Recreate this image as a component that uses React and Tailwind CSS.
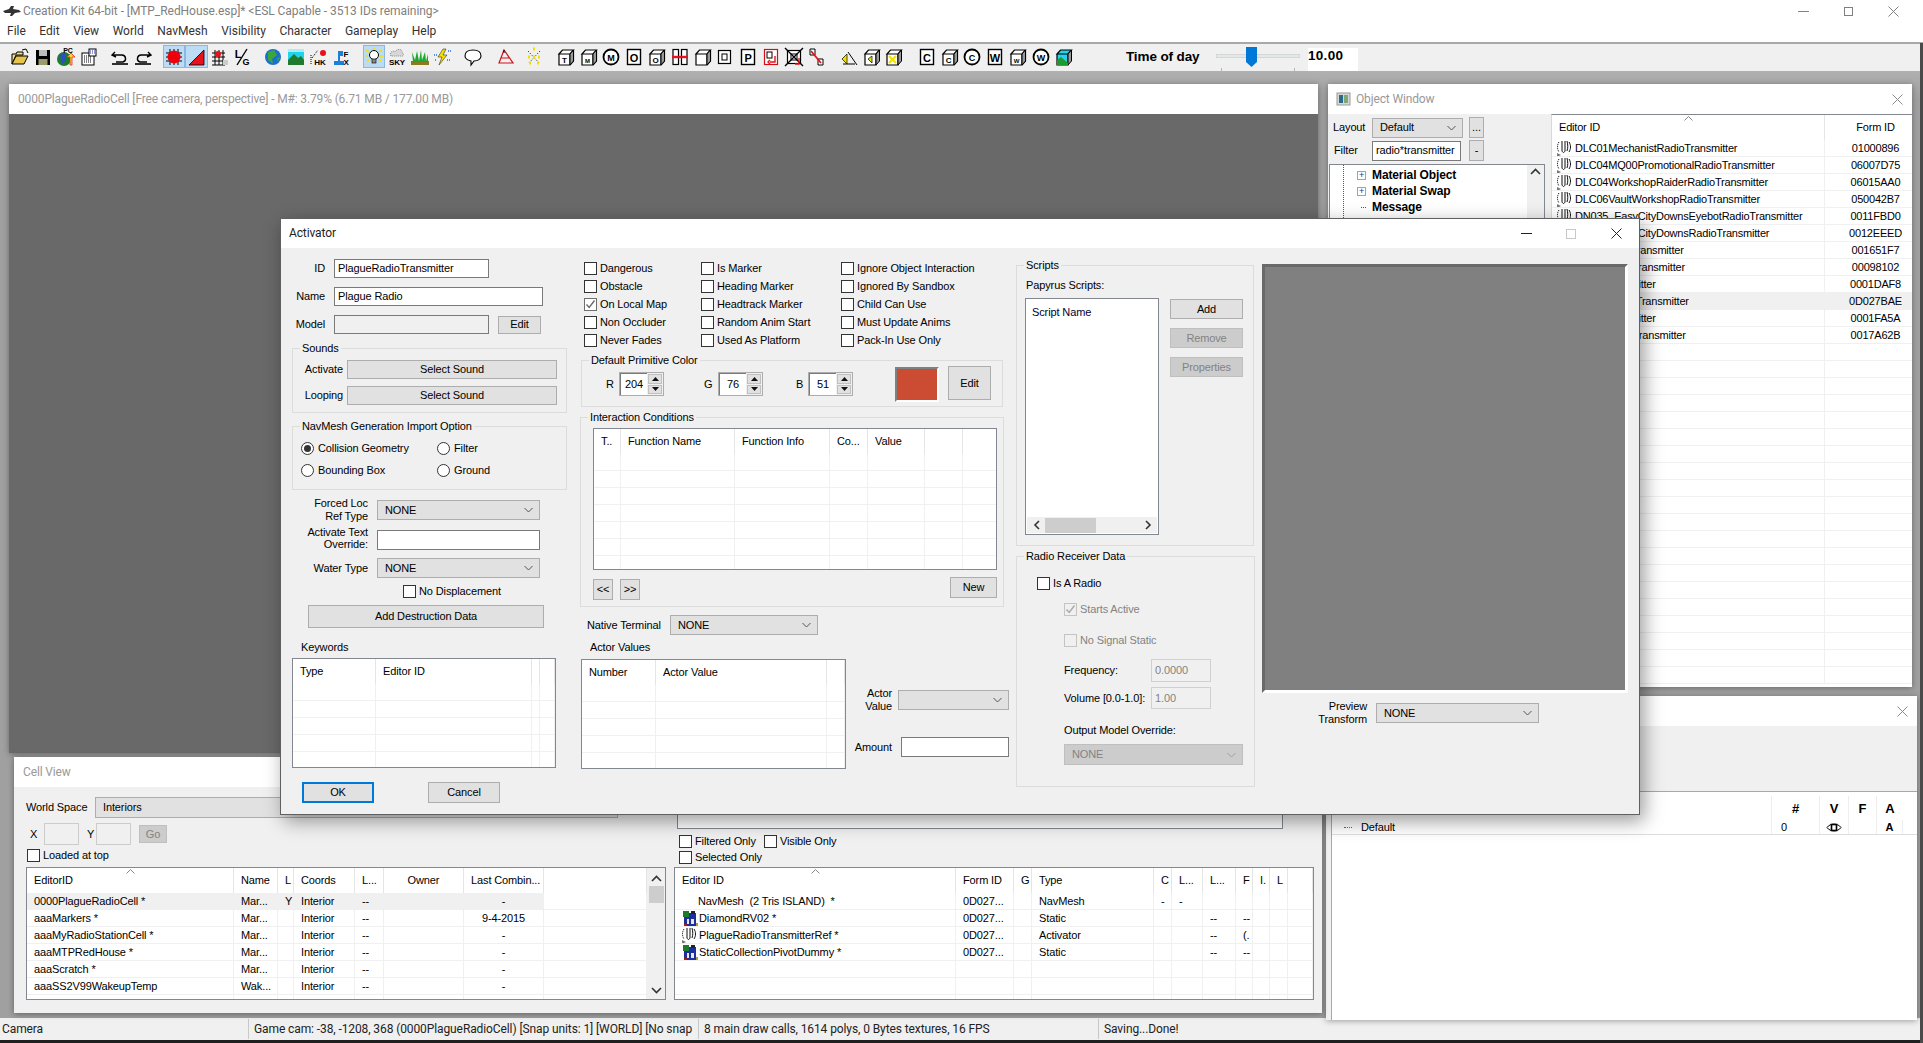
import React from "react";

const Chevron = ({ c = "#555" }) => (
  <svg width="9" height="6" viewBox="0 0 9 6" className="shrink-0"><path d="M0.5 1L4.5 5L8.5 1" fill="none" stroke={c} strokeWidth="1" /></svg>
);
const XMark = ({ c = "#808080", s = 11 }) => (
  <svg width={s} height={s} viewBox="0 0 11 11" className="shrink-0"><path d="M0.5 0.5L10.5 10.5M10.5 0.5L0.5 10.5" stroke={c} strokeWidth="1" fill="none" /></svg>
);
const Select = ({ className = "", text = "", disabled }) => (
  <div className={`flex items-center justify-between pl-[7px] pr-[6px] border shrink-0 ${disabled ? "bg-[#cccccc] border-[#bfbfbf] text-[#838383]" : "bg-[#e1e1e1] border-[#adadad]"} ${className}`}>
    <span>{text}</span>
    <Chevron c={disabled ? "#a0a0a0" : "#555"} />
  </div>
);
const Btn = ({ className = "", children, disabled, def }) => (
  <div className={`flex items-center justify-center shrink-0 border ${def ? "border-2 border-[#0078d7] bg-[#e1e1e1]" : disabled ? "bg-[#cccccc] border-[#bfbfbf] text-[#838383]" : "bg-[#e1e1e1] border-[#adadad]"} ${className}`}>{children}</div>
);
const Input = ({ className = "", children, disabled }) => (
  <div className={`flex items-center px-[3px] border shrink-0 ${disabled ? "bg-[#f0f0f0] border-[#cccccc] text-[#838383]" : "bg-white border-[#7a7a7a]"} ${className}`}>{children}</div>
);
const Check = ({ label, checked, disabled, className = "" }) => (
  <div className={`flex items-center h-[13px] ${className}`}>
    <div className={`w-[13px] h-[13px] shrink-0 border flex items-center justify-center ${disabled ? "border-[#c4c4c4] bg-[#f0f0f0]" : checked ? "border-[#6e6e6e] bg-white" : "border-[#333333] bg-white"}`}>
      {checked && <svg width="11" height="11" viewBox="0 0 11 11"><path d="M1.5 5.5L4.2 8.5L9.5 1.5" fill="none" stroke={disabled ? "#a8a8a8" : "#6a6a6a"} strokeWidth="1.4" /></svg>}
    </div>
    <span className={`ml-[3px] whitespace-nowrap ${disabled ? "text-[#838383]" : ""}`}>{label}</span>
  </div>
);
const Radio = ({ label, on, className = "" }) => (
  <div className={`flex items-center h-[13px] ${className}`}>
    <div className="w-[13px] h-[13px] rounded-full border border-[#333333] bg-white flex items-center justify-center shrink-0">
      {on && <div className="w-[7px] h-[7px] rounded-full bg-[#333333]" />}
    </div>
    <span className="ml-[4px] whitespace-nowrap">{label}</span>
  </div>
);
const Group = ({ title, className = "", children }) => (
  <div className={`relative border border-[#dcdcdc] shrink-0 ${className}`}>
    <span className="absolute -top-[7px] left-[7px] px-[2px] bg-[#f0f0f0] whitespace-nowrap leading-[12px]">{title}</span>
    {children}
  </div>
);
const Spin = ({ label, value, className = "", labelClass = "" }) => (
  <div className={`flex items-center h-[24px] shrink-0 ${className}`}>
    <span className={labelClass}>{label}</span>
    <div className="flex w-[45px] h-[24px] border border-[#adadad]">
      <div className="w-[27px] bg-white border-l border-t border-[#7a7a7a] text-center pt-[4px]">{value}</div>
      <div className="flex-1 flex flex-col bg-[#f0f0f0] p-[1px] gap-[1px]">
        <div className="flex-1 bg-[#e1e1e1] border border-[#c0c0c0] flex items-center justify-center"><svg width="7" height="4" viewBox="0 0 7 4"><path d="M3.5 0L7 4H0Z" fill="#111" /></svg></div>
        <div className="flex-1 bg-[#e1e1e1] border border-[#c0c0c0] flex items-center justify-center"><svg width="7" height="4" viewBox="0 0 7 4"><path d="M0 0H7L3.5 4Z" fill="#111" /></svg></div>
      </div>
    </div>
  </div>
);

const ActivatorIcon = () => (
  <svg width="18" height="17" viewBox="0 0 18 17" className="shrink-0">
    <path d="M3 2C1 5 1 9 3 12" fill="none" stroke="#000" strokeWidth="1" strokeDasharray="1 1" />
    <path d="M6 1V11M9 1V11M6 11C7 13 8 13 9 11M13 2C15 5 15 9 13 12M11 1C12 5 12 8 11 11" fill="none" stroke="#111" strokeWidth="1" />
    <path d="M1 13L5 15L1 17Z" fill="#777" />
  </svg>
);
const StaticIcon = () => (
  <svg width="17" height="17" viewBox="0 0 17 17" className="shrink-0" shapeRendering="crispEdges">
    <rect x="2" y="3" width="12" height="13" fill="#1c2f9c" />
    <rect x="1" y="1" width="6" height="6" fill="#1e7a2e" />
    <rect x="9" y="1" width="4" height="3" fill="#222" />
    <rect x="5" y="9" width="2" height="5" fill="#e8e8e8" />
    <rect x="9" y="9" width="3" height="5" fill="#e8e8e8" />
    <rect x="14" y="13" width="2" height="3" fill="#b0a030" />
    <rect x="2" y="14" width="3" height="2" fill="#a02020" />
  </svg>
);
const Caret = () => (
  <svg width="9" height="5" viewBox="0 0 9 5" className="absolute top-[1px] left-1/2 -ml-[4px]"><path d="M0.5 4.5L4.5 0.5L8.5 4.5" fill="none" stroke="#888" strokeWidth="1" /></svg>
);

const ListView = ({ className = "", cols, rows = [], headH = 25, minRows = 4, selected = -1, selectTo, right }) => {
  const total = Math.max(minRows, rows.length);
  const selW = selectTo;
  return (
    <div className={`flex border border-[#828790] bg-white overflow-hidden shrink-0 ${className}`}>
      <div className="flex-1 min-w-0 overflow-hidden">
        <div className="flex" style={{ height: headH }}>
          {cols.map((c, i) => (
            <div key={i} style={{ width: c.w }} className={`relative shrink-0 flex items-center border-r border-[#e5e5e5] whitespace-nowrap overflow-hidden ${c.headCenter ? "justify-center" : "pl-[7px]"}`}>
              {c.caret && <Caret />}
              {c.label}
            </div>
          ))}
        </div>
        {Array.from({ length: total }).map((_, r) => (
          <div key={r} className="relative flex h-[17px] border-b border-[#f0f0f0]">
            {r === selected && <div className="absolute left-0 top-0 h-[17px] bg-[#f0f0f0]" style={{ width: selW || "100%" }} />}
            {cols.map((c, i) => {
              const v = rows[r] ? rows[r][i] : "";
              return (
                <div key={i} style={{ width: c.w }} className={`relative shrink-0 flex items-center border-r border-[#f0f0f0] whitespace-nowrap overflow-hidden ${c.center ? "justify-center" : c.nopad ? "" : "pl-[7px]"}`}>{v}</div>
              );
            })}
          </div>
        ))}
      </div>
      {right}
    </div>
  );
};

/* ---------- toolbar drawings ---------- */
const S = ({ children }) => (<svg width="20" height="20" viewBox="0 0 20 20" className="shrink-0">{children}</svg>);
const L = ({ x = 10, y = 14, t, s = 9, c = "#000", w = "700" }) => (<text x={x} y={y} fontSize={s} fontWeight={w} fill={c} textAnchor="middle" fontFamily="Liberation Sans, sans-serif">{t}</text>);
const Cube = ({ l, s = 8 }) => (
  <S>
    <path d="M3 7H14V18H3ZM3 7L6.5 3H17.5L14 7ZM14 18L17.5 14V3" fill="#fff" stroke="#000" strokeWidth="1.2" />
    <path d="M14 7L17.5 3V14L14 18Z" fill="#999" stroke="#000" strokeWidth="1" />
    {l && <L x={8.5} y={16} t={l} s={s} />}
  </S>
);
const Sq = ({ l }) => (<S><rect x="3.5" y="2.5" width="13" height="15" fill="#fff" stroke="#000" strokeWidth="1.4" /><L y={14.5} t={l} s={11} /></S>);
const Circ = ({ l }) => (<S><circle cx="10" cy="10" r="7.5" fill="#fff" stroke="#000" strokeWidth="1.8" /><L y={13.5} t={l} s={9} /></S>);
const T = {
  open: <S><path d="M2 7H6L7 5H13V8H6L2 17Z" fill="#f5e08a" stroke="#000" /><path d="M2 17L6 9H18L14 17Z" fill="#e6c54a" stroke="#000" /><path d="M12 3L16 2L18 6" fill="none" stroke="#000" /></S>,
  save: <S><rect x="3" y="3" width="14" height="15" fill="#000" /><rect x="6" y="3" width="8" height="6" fill="#bbb" /><rect x="5.5" y="12" width="9" height="6" fill="#9a9a6a" /></S>,
  pc: <S><circle cx="8" cy="12" r="7" fill="#1f7a2f" /><path d="M4 8L9 6L10 13L6 17Z" fill="#2a4fc8" /><path d="M14 18V10H11L15 6L19 10H16V18Z" fill="#f6d42a" stroke="#d33" strokeWidth=".8" /><L x={12} y={6} t="PC" s={7} /></S>,
  form: <S><rect x="3" y="6" width="12" height="12" fill="#fff" stroke="#000" /><path d="M5 9H13M5 11H13M5 13H13M5 15H13" stroke="#000" strokeDasharray="1 1" /><rect x="10" y="2" width="7" height="7" fill="#fff" stroke="#000" /><path d="M11 4H16M11 6H16" stroke="#33a" strokeDasharray="1 1" /></S>,
  undo: <S><path d="M5 5L2 8L6 10M3 8H12C16 8 17 14 13 15H6" fill="none" stroke="#000" strokeWidth="1.4" /><path d="M2 17H18" stroke="#000" strokeWidth="1.6" /></S>,
  redo: <S><path d="M15 5L18 8L14 10M17 8H8C4 8 3 14 7 15H14" fill="none" stroke="#000" strokeWidth="1.4" /><path d="M2 17H18" stroke="#000" strokeWidth="1.6" /></S>,
  dot: <S><path d="M2 6H18M2 10H18M2 14H18M6 2V18M10 2V18M14 2V18" stroke="#000" strokeWidth="1" /><circle cx="10" cy="10" r="6.5" fill="#f0000a" /></S>,
  tri: <S><path d="M2 18L17 3V18Z" fill="#e8101a" stroke="#000" strokeWidth=".8" /></S>,
  grid: <S><path d="M2 6H15M2 10H15M2 14H15M2 18H15M5 3V18M9 3V18M13 3V18" stroke="#000" strokeWidth="1" /><circle cx="8" cy="7" r="3" fill="#e8101a" /><rect x="13" y="13" width="5" height="5" fill="#ccc" /></S>,
  lg: <S><L x={6} y={11} t="L" s={11} /><path d="M5 18L15 2" stroke="#000" strokeWidth="1.4" /><L x={14} y={18} t="G" s={9} /></S>,
  globe: <S><circle cx="10" cy="10" r="8" fill="#1c6fd0" /><path d="M5 5L11 3L14 8L9 12L10 17L5 13Z" fill="#38a83a" /><path d="M14 11L17 10L15 15Z" fill="#38a83a" /></S>,
  land: <S><rect x="2" y="2" width="16" height="16" fill="#22d3ee" /><path d="M2 18V13L8 7L12 11L15 9L18 13V18Z" fill="#1d7a2f" /><path d="M2 2H18V5H2Z" fill="#fff" opacity=".6" /></S>,
  hk: <S><circle cx="14" cy="6" r="3" fill="#e8101a" /><path d="M3 11L9 3" stroke="#000" strokeDasharray="1 1" /><path d="M2 8V18" stroke="#000" strokeDasharray="1 1" /><L x={11} y={18} t="HK" s={8} /></S>,
  fx: <S><path d="M3 18V14H7V4H12V9H9V14H13V18Z" fill="#1c80d8" /><L x={15} y={10} t="F" s={8} /><L x={15} y={18} t="X" s={8} /></S>,
  bulb: <S><circle cx="10" cy="8" r="4.5" fill="#fff" stroke="#000" /><rect x="8" y="12" width="4" height="4" fill="#888" stroke="#000" strokeWidth=".6" /><path d="M2 3L5 5M18 3L15 5M1 9H4M16 9H19M3 14L5 13M17 14L15 13M10 1V2" stroke="#f2e000" strokeWidth="1.6" /></S>,
  sky: <S><path d="M4 9C2 5 6 3 8 5C10 1 16 2 15 6C18 7 16 10 14 9Z" fill="#d8d8d8" stroke="#888" strokeDasharray="1 1" /><L y={18} t="SKY" s={8} /></S>,
  grass: <S><rect x="1" y="14" width="18" height="4" fill="#8a7a20" /><path d="M3 15L2 5L5 13L7 4L9 14L11 3L12 13L15 5L16 14L18 7V15Z" fill="#1fa82f" /></S>,
  bolt: <S><path d="M11 2L6 10H10L7 18L15 8H11L14 2Z" fill="#f6e000" stroke="#333" strokeWidth=".6" /><path d="M2 8H5M3 13H5M15 13H18M16 4H19" stroke="#1c70d8" strokeWidth="1.6" strokeDasharray="1 1" /></S>,
  bubble: <S><path d="M10 3C15 3 18 5 18 9C18 12 15 14 11 14L8 18L8 14C4 13 2 12 2 9C2 5 5 3 10 3Z" fill="#fff" stroke="#000" strokeWidth="1.1" /></S>,
  wire: <S><path d="M3 16L8 3L17 16ZM5 11H13" fill="none" stroke="#d01018" strokeWidth="1.2" /><path d="M8 3V6" stroke="#000" /></S>,
  yx: <S><path d="M4 4L16 17M16 4L4 17" stroke="#000" strokeDasharray="1 2" /><path d="M9 2H11M4 10H6M14 10H16M9 10H11M5 16H7M13 16H15" stroke="#f2e000" strokeWidth="3" /></S>,
  redH: <S><rect x="3" y="2.5" width="5.5" height="15" fill="#fff" stroke="#000" strokeWidth="1.2" /><rect x="11.5" y="2.5" width="5.5" height="15" fill="#fff" stroke="#000" strokeWidth="1.2" /><path d="M2 10H18" stroke="#e8101a" strokeWidth="2.4" /></S>,
  sq: <S><rect x="3.5" y="3.5" width="12" height="13" fill="#fff" stroke="#000" strokeWidth="1.2" /><rect x="7" y="7" width="5" height="6" fill="#fff" stroke="#000" /></S>,
  arrowbox: <S><rect x="3.5" y="2.5" width="13" height="15" fill="#fff" stroke="#d01018" strokeWidth="1.2" /><rect x="6" y="5" width="5" height="6" fill="none" stroke="#000" /><path d="M14 9V15H9M9 13L7 15L9 17" fill="none" stroke="#e8101a" strokeWidth="1.4" /></S>,
  xbox: <S><rect x="3.5" y="3.5" width="13" height="13" fill="#fff" stroke="#000" strokeWidth="1.2" /><path d="M1 1L19 19M19 1L1 19" stroke="#000" strokeWidth="1.4" /><rect x="7" y="7" width="6" height="6" fill="none" stroke="#000" /><path d="M15 11V17H11" stroke="#e8101a" fill="none" strokeWidth="1.4" /></S>,
  pipe: <S><path d="M3 2H8V8H3ZM11 12H16V18H11Z" fill="#fff" stroke="#000" /><path d="M4 4L14 16" stroke="#e8101a" strokeWidth="1.8" /></S>,
  speak: <S><path d="M9 5L18 18M4 17L16 17" stroke="#000" strokeWidth="1" /><path d="M3 12L8 7V17Z" fill="#f2e000" stroke="#000" strokeWidth=".7" /></S>,
  cubeS: <S><path d="M3 7H14V18H3ZM3 7L6.5 3H17.5L14 7Z" fill="#fff" stroke="#000" strokeWidth="1.2" /><path d="M14 7L17.5 3V14L14 18Z" fill="#999" stroke="#000" /><path d="M6 12L10 9V16Z" fill="#f2e000" stroke="#000" strokeWidth=".7" /></S>,
  cubeX: <S><path d="M3 7H14V18H3ZM3 7L6.5 3H17.5L14 7Z" fill="#fff" stroke="#000" strokeWidth="1.2" /><path d="M14 7L17.5 3V14L14 18Z" fill="#999" stroke="#000" /><path d="M5 9L12 16M12 9L5 16" stroke="#f2e000" strokeWidth="2" /></S>,
  cubeL: <S><path d="M3 7H14V18H3ZM3 7L6.5 3H17.5L14 7Z" fill="#22d3ee" stroke="#000" strokeWidth="1.2" /><path d="M14 7L17.5 3V14L14 18Z" fill="#999" stroke="#000" /><path d="M3 18V13L7 10L14 16V18Z" fill="#1c9a2f" /></S>,
};
const groups = [
  { gap: 8.4, items: [T.open, T.save, T.pc, T.form] },
  { gap: 8.4, items: [T.undo, T.redo] },
  { gap: 7.8, items: [{ a: 1, i: T.dot }, { a: 1, i: T.tri }, T.grid, T.lg] },
  { gap: 9.8, items: [T.globe, T.land, T.hk, T.fx] },
  { gap: 7.8, items: [{ a: 1, i: T.bulb }, T.sky, T.grass, T.bolt] },
  { gap: 10.2, items: [T.bubble] },
  { gap: 5.2, items: [T.wire] },
  { gap: 9.2, items: [T.yx] },
  { gap: 9.4, items: [<Cube l="T" />, <Cube l="M" s={6} />, <Circ l="M" />, <Sq l="O" />, <Cube l="O" />, T.redH, <Cube />, T.sq, <Sq l="P" />, T.arrowbox, T.xbox, T.pipe] },
  { gap: 9.6, items: [T.speak, T.cubeS, T.cubeX] },
  { gap: 0, items: [<Sq l="C" />, <Cube l="C" />, <Circ l="C" />, <Sq l="W" />, <Cube l="W" s={6} />, <Circ l="W" />, T.cubeL] },
];
const Toolbar = () => (
  <div className="flex items-center h-[29px] pl-[9px] pb-[2px] bg-[#f0f0f0] border-t-2 border-[#a8a8a8] shrink-0">
    {groups.map((g, gi) => (
      <div key={gi} className="flex items-center" style={{ marginRight: g.gap }}>
        {g.items.map((it, i) => {
          const active = it && it.a;
          return (
            <div key={i} className={`w-[22.8px] h-[23px] flex items-center justify-center border ${active ? "bg-[#bcdcf5] border-[#8cb8e0]" : "border-transparent"}`}>{active ? it.i : it}</div>
          );
        })}
      </div>
    ))}
    <span className="ml-[51px] font-bold text-[13.5px] whitespace-nowrap w-[90px] text-black">Time of day</span>
    <div className="relative w-[84px] h-[27px] shrink-0 self-start">
      <div className="absolute left-0 right-0 top-[10px] h-[4px] bg-[#e3e8e8] border border-[#d6d6d6]" />
      <svg width="11" height="20" viewBox="0 0 11 20" className="absolute left-[30px] top-[3px]"><path d="M0 0H11V15L5.5 20L0 15Z" fill="#0078d7" /></svg>
      <div className="absolute left-[5px] top-[24px] w-[1px] h-[3px] bg-[#b5b5b5]" />
      <div className="absolute left-[78px] top-[24px] w-[1px] h-[3px] bg-[#b5b5b5]" />
    </div>
    <div className="ml-[8px] w-[50px] h-[23px] self-start mt-[4px] bg-white font-bold text-[13.5px] leading-[16px] tracking-[0.3px]">10.00</div>
  </div>
);

/* ---------- dialog ---------- */
const chkRows = [
  ["Dangerous", "Is Marker", "Ignore Object Interaction"],
  ["Obstacle", "Heading Marker", "Ignored By Sandbox"],
  ["On Local Map", "Headtrack Marker", "Child Can Use"],
  ["Non Occluder", "Random Anim Start", "Must Update Anims"],
  ["Never Fades", "Used As Platform", "Pack-In Use Only"],
];

const DialogCol1 = () => (
  <div className="w-[275px] shrink-0 flex flex-col">
    <div className="flex items-center h-[19px] mt-[11px]">
      <span className="w-[33px] text-right">ID</span>
      <Input className="ml-[9px] w-[155px] h-[19px]">PlagueRadioTransmitter</Input>
    </div>
    <div className="flex items-center h-[19px] mt-[9px]">
      <span className="w-[33px] text-right">Name</span>
      <Input className="ml-[9px] w-[209px] h-[19px]">Plague Radio</Input>
    </div>
    <div className="flex items-center h-[19px] mt-[9px]">
      <span className="w-[33px] text-right">Model</span>
      <Input className="ml-[9px] w-[155px] h-[19px] !bg-[#f0f0f0]" />
      <Btn className="ml-[9px] w-[43px] h-[18px]">Edit</Btn>
    </div>
    <Group title="Sounds" className="mt-[14px] w-[275px] h-[65px] pt-[11px]">
      <div className="flex items-center h-[19px]">
        <span className="w-[50px] text-right">Activate</span>
        <Btn className="ml-[4px] w-[210px] h-[19px]">Select Sound</Btn>
      </div>
      <div className="flex items-center h-[19px] mt-[7px]">
        <span className="w-[50px] text-right">Looping</span>
        <Btn className="ml-[4px] w-[210px] h-[19px]">Select Sound</Btn>
      </div>
    </Group>
    <Group title="NavMesh Generation Import Option" className="mt-[13px] w-[275px] h-[64px] pt-[15px] pl-[8px]">
      <div className="grid grid-cols-[136px_1fr] gap-y-[9px]">
        <Radio on label="Collision Geometry" />
        <Radio label="Filter" />
        <Radio label="Bounding Box" />
        <Radio label="Ground" />
      </div>
    </Group>
    <div className="flex items-center h-[20px] mt-[10px]">
      <span className="w-[76px] text-right leading-[13px]">Forced Loc<br />Ref Type</span>
      <Select className="ml-[9px] w-[163px] h-[20px]" text="NONE" />
    </div>
    <div className="flex items-center h-[20px] mt-[10px]">
      <span className="w-[76px] text-right leading-[12px] -mt-[4px]">Activate Text<br />Override:</span>
      <Input className="ml-[9px] w-[163px] h-[20px]" />
    </div>
    <div className="flex items-center h-[20px] mt-[8px]">
      <span className="w-[76px] text-right">Water Type</span>
      <Select className="ml-[9px] w-[163px] h-[20px]" text="NONE" />
    </div>
    <Check label="No Displacement" className="mt-[7px] ml-[111px]" />
    <Btn className="mt-[7px] ml-[16px] w-[236px] h-[23px]">Add Destruction Data</Btn>
    <span className="mt-[13px] ml-[9px] h-[12px] leading-[12px]">Keywords</span>
    <ListView className="mt-[5px] w-[264px] h-[110px]" headH={25} minRows={5}
      cols={[{ label: "Type", w: 83 }, { label: "Editor ID", w: 156 }, { label: "", w: 4 }, { label: "", w: 15 }]} />
    <div className="flex mt-[14px] ml-[10px]">
      <Btn def className="w-[72px] h-[21px]">OK</Btn>
      <Btn className="ml-[54px] w-[72px] h-[21px]">Cancel</Btn>
    </div>
  </div>
);

const DialogCol2 = () => (
  <div className="w-[430px] ml-[13px] shrink-0 flex flex-col">
    <div className="grid grid-cols-[117px_140px_1fr] gap-y-[5px] mt-[14px] pl-[4px]">
      {chkRows.flat().map((t) => <Check key={t} label={t} checked={t === "On Local Map"} />)}
    </div>
    <Group title="Default Primitive Color" className="mt-[13px] ml-[1px] w-[422px] h-[47px]">
      <div className="flex items-start pt-[5px]">
        <Spin label="R" value="204" className="mt-[6px] ml-[24px]" labelClass="w-[13px]" />
        <Spin label="G" value="76" className="mt-[6px] ml-[40px]" labelClass="w-[14px]" />
        <Spin label="B" value="51" className="mt-[6px] ml-[33px]" labelClass="w-[12px]" />
        <div className="ml-[42px] mt-[1px] w-[44px] h-[35px] bg-[#cc4c33] border-l-2 border-t-2 border-r-2 border-b-2 border-l-[#7f7f7f] border-t-[#7f7f7f] border-r-white border-b-white shrink-0" />
        <Btn className="ml-[9px] w-[43px] h-[34px]">Edit</Btn>
      </div>
    </Group>
    <Group title="Interaction Conditions" className="mt-[10px] w-[424px] h-[190px] pt-[10px] pl-[12px]">
      <ListView className="w-[404px] h-[142px]" headH={25} minRows={7}
        cols={[{ label: "T..", w: 27 }, { label: "Function Name", w: 114 }, { label: "Function Info", w: 95 }, { label: "Co...", w: 38 }, { label: "Value", w: 57 }, { label: "", w: 38 }, { label: "", w: 34 }]} />
      <div className="flex items-start mt-[7px]">
        <Btn className="mt-[2px] w-[20px] h-[21px]">&lt;&lt;</Btn>
        <Btn className="mt-[2px] ml-[7px] w-[20px] h-[21px]">&gt;&gt;</Btn>
        <Btn className="ml-auto mr-[6px] w-[47px] h-[21px]">New</Btn>
      </div>
    </Group>
    <div className="flex items-center h-[20px] mt-[8px] pl-[7px]">
      <span className="w-[83px]">Native Terminal</span>
      <Select className="w-[148px] h-[20px]" text="NONE" />
    </div>
    <span className="mt-[6px] ml-[10px] h-[12px] leading-[12px]">Actor Values</span>
    <div className="flex mt-[6px] ml-[1px]">
      <ListView className="w-[265px] h-[110px]" headH={25} minRows={5}
        cols={[{ label: "Number", w: 74 }, { label: "Actor Value", w: 171 }, { label: "", w: 18 }]} />
      <div className="flex flex-col">
        <div className="flex items-center mt-[31px] h-[20px]">
          <span className="w-[46px] text-right leading-[13px]">Actor<br />Value</span>
          <Select className="ml-[6px] w-[111px] h-[20px]" />
        </div>
        <div className="flex items-center mt-[27px] h-[20px]">
          <span className="w-[46px] text-right">Amount</span>
          <Input className="ml-[9px] w-[108px] h-[20px]" />
        </div>
      </div>
    </div>
  </div>
);

const DialogCol3 = () => (
  <div className="w-[239px] ml-[6px] shrink-0 flex flex-col">
    <Group title="Scripts" className="mt-[17px] w-[238px] h-[281px] pt-[13px] pl-[8px]">
      <div className="h-[12px] leading-[12px] ml-[1px]">Papyrus Scripts:</div>
      <div className="flex mt-[7px]">
        <div className="w-[134px] h-[237px] border border-[#828790] bg-white flex flex-col justify-between shrink-0">
          <div className="pl-[6px] pt-[7px] text-[#000033]">Script Name</div>
          <div className="h-[16px] m-[1px] bg-[#f0f0f0] flex items-center">
            <svg width="16" height="16" viewBox="0 0 16 16" className="shrink-0 ml-[2px]"><path d="M10 4L6 8L10 12" fill="none" stroke="#333" strokeWidth="1.6" /></svg>
            <div className="w-[51px] h-[15px] bg-[#cdcdcd]" />
            <div className="flex-1" />
            <svg width="16" height="16" viewBox="0 0 16 16" className="shrink-0 mr-[1px]"><path d="M6 4L10 8L6 12" fill="none" stroke="#333" strokeWidth="1.6" /></svg>
          </div>
        </div>
        <div className="ml-[11px] mt-[1px] flex flex-col gap-[9px]">
          <Btn className="w-[73px] h-[20px]">Add</Btn>
          <Btn disabled className="w-[73px] h-[20px]">Remove</Btn>
          <Btn disabled className="w-[73px] h-[20px]">Properties</Btn>
        </div>
      </div>
    </Group>
    <Group title="Radio Receiver Data" className="mt-[10px] w-[239px] h-[231px] pt-[20px] pl-[20px]">
      <Check label="Is A Radio" />
      <div className="ml-[27px] flex flex-col">
        <Check disabled checked label="Starts Active" className="mt-[13px]" />
        <Check disabled label="No Signal Static" className="mt-[18px]" />
        <div className="flex items-center mt-[12px] h-[23px]">
          <span className="w-[87px]">Frequency:</span>
          <Input disabled className="w-[60px] h-[23px] !border-[#d0d0d0]">0.0000</Input>
        </div>
        <div className="flex items-center mt-[5px] h-[22px]">
          <span className="w-[87px] whitespace-nowrap">Volume [0.0-1.0]:</span>
          <Input disabled className="w-[60px] h-[22px] !border-[#d0d0d0]">1.00</Input>
        </div>
        <span className="mt-[15px] h-[12px] leading-[12px]">Output Model Override:</span>
        <Select disabled className="mt-[8px] w-[179px] h-[21px]" text="NONE" />
      </div>
    </Group>
  </div>
);

const DialogCol4 = () => (
  <div className="w-[366px] ml-[7px] shrink-0 flex flex-col">
    <div className="mt-[16px] w-[366px] h-[429px] bg-[#808080] border-[3px] border-l-[#696969] border-t-[#696969] border-r-white border-b-white" />
    <div className="flex items-center mt-[10px] h-[20px]">
      <span className="w-[105px] text-right leading-[13px]">Preview<br />Transform</span>
      <Select className="ml-[9px] w-[163px] h-[20px]" text="NONE" />
    </div>
  </div>
);

const Dialog = () => (
  <div className="absolute left-[280px] top-[147px] w-[1360px] h-[597px] bg-[#f0f0f0] border border-[#606060] shadow-[4px_6px_18px_rgba(0,0,0,0.4)] flex flex-col">
    <div className="h-[29px] bg-white flex items-center pl-[8px] shrink-0 text-[12px] font-['Roboto',sans-serif] text-[#222]">
      <span>Activator</span>
      <div className="ml-auto flex items-center">
        <div className="w-[11px] h-[1px] bg-[#222] mr-[34px]" />
        <div className="w-[10px] h-[10px] border border-[#c8c8c8] mr-[35px]" />
        <div className="mr-[17px]"><XMark c="#222" /></div>
      </div>
    </div>
    <div className="flex pl-[11px]">
      <DialogCol1 />
      <DialogCol2 />
      <DialogCol3 />
      <DialogCol4 />
    </div>
  </div>
);

/* ---------- windows ---------- */
const WinTitle = ({ text, icon, close }) => (
  <div className="h-[30px] bg-white flex items-center pl-[9px] shrink-0 text-[12px] tracking-[-0.14px] font-['Roboto',sans-serif] text-[#999999]">
    {icon}
    <span className="whitespace-nowrap">{text}</span>
    {close && <div className="ml-auto mr-[9px]"><XMark c="#8a8a8a" s={11} /></div>}
  </div>
);

const Viewport = () => (
  <div className="absolute left-[9px] top-[13px] w-[1309px] h-[669px] bg-[#696969] flex flex-col shadow-[0_1px_6px_rgba(0,0,0,0.35)]">
    <WinTitle text="0000PlagueRadioCell [Free camera, perspective] - M#: 3.79% (6.71 MB / 177.00 MB)" />
  </div>
);

const objNames = [
  ["DLC01MechanistRadioTransmitter", "01000896"],
  ["DLC04MQ00PromotionalRadioTransmitter", "06007D75"],
  ["DLC04WorkshopRaiderRadioTransmitter", "06015AA0"],
  ["DLC06VaultWorkshopRadioTransmitter", "050042B7"],
  ["DN035_EasyCityDownsEyebotRadioTransmitter", "0011FBD0"],
  ["DN035_EasyCityDownsRadioTransmitter", "0012EEED"],
  ["MS09RadioTransmitter", "001651F7"],
  ["MQ02RadioTransmitter", "00098102"],
  ["RadioTransmitter", "0001DAF8"],
  ["PlagueRadioTransmitter", "0D027BAE"],
  ["RadioTransmitter", "0001FA5A"],
  ["CastleRadioTransmitter", "0017A62B"],
];
const ObjectWindow = () => (
  <div className="absolute left-[1328px] top-[13px] w-[584px] h-[603px] bg-[#f0f0f0] flex flex-col shadow-[0_1px_6px_rgba(0,0,0,0.35)]">
    <WinTitle close text="Object Window" icon={
      <svg width="16" height="16" viewBox="0 0 16 16" className="mr-[4px] -ml-[1px]"><rect x="1" y="2" width="13" height="12" fill="#d8d8d8" stroke="#9a9a9a" /><rect x="3" y="4" width="4" height="8" fill="#2b6a8a" /><rect x="8" y="4" width="4" height="8" fill="#7fa878" /></svg>
    } />
    <div className="flex flex-1 min-h-0">
      <div className="w-[223px] shrink-0 flex flex-col">
        <div className="flex items-center h-[21px] mt-[3px] pl-[5px]">
          <span className="w-[39px]">Layout</span>
          <Select className="w-[91px] h-[20px]" text="Default" />
          <Btn className="ml-[6px] w-[15px] h-[21px]">...</Btn>
        </div>
        <div className="flex items-center h-[21px] mt-[2px] pl-[6px]">
          <span className="w-[38px]">Filter</span>
          <Input className="w-[89px] h-[20px]">radio*transmitter</Input>
          <Btn className="ml-[8px] w-[15px] h-[21px]">-</Btn>
        </div>
        <div className="relative mt-[3px] ml-[1px] w-[216px] flex-1 bg-white border border-[#828790] font-bold text-[12px] flex">
          <div className="flex-1 pt-[2px] relative">
            <div className="absolute left-[13px] top-0 bottom-0 border-l border-dotted border-[#555]" />
            {["Material Object", "Material Swap", "Message"].map((t, i) => (
              <div key={t} className="flex items-center h-[16px]">
                <div className="ml-[27px] w-[9px] h-[9px] shrink-0 flex items-center justify-center">
                  {i < 2 ? (
                    <div className="w-[9px] h-[9px] border border-[#9aa4b8] bg-white flex items-center justify-center text-[#22348a] text-[9px] leading-[9px] font-normal">+</div>
                  ) : <div className="w-[9px] border-t border-dotted border-[#555] ml-[4px]" />}
                </div>
                <span className="ml-[6px] whitespace-nowrap">{t}</span>
              </div>
            ))}
          </div>
          <div className="w-[17px] bg-[#f0f0f0] flex justify-center pt-[3px]">
            <svg width="11" height="7" viewBox="0 0 11 7"><path d="M1 6L5.5 1.5L10 6" fill="none" stroke="#333" strokeWidth="1.6" /></svg>
          </div>
        </div>
      </div>
      <ListView className="w-[361px] border-t-[#828790] border-l-[#d8d8d8] border-r-0 border-b-0 tracking-[-0.2px]" headH={25} minRows={32} selected={9}
        cols={[{ label: "Editor ID", w: 273, caret: 1, nopad: 1 }, { label: "Form ID", w: 102, center: 1, headCenter: 1 }]}
        rows={objNames.map(([n, f]) => [
          <div className="flex items-center pl-[4px]"><ActivatorIcon /><span className="ml-[1px]">{n}</span></div>, f,
        ])} />
    </div>
  </div>
);

const leftRows = [
  ["0000PlagueRadioCell *", "Mar...", "Y", "Interior", "--", "", "-"],
  ["aaaMarkers *", "Mar...", "", "Interior", "--", "", "9-4-2015"],
  ["aaaMyRadioStationCell *", "Mar...", "", "Interior", "--", "", "-"],
  ["aaaMTPRedHouse *", "Mar...", "", "Interior", "--", "", "-"],
  ["aaaScratch *", "Mar...", "", "Interior", "--", "", "-"],
  ["aaaSS2V99WakeupTemp", "Wak...", "", "Interior", "--", "", "-"],
];
const rightRows = [
  [<span className="pl-[16px]">NavMesh&nbsp; (2 Tris ISLAND)&nbsp; *</span>, "0D027...", "", "NavMesh", "-", "-", "", "", "", ""],
  [<span className="flex items-center"><StaticIcon />DiamondRV02 *</span>, "0D027...", "", "Static", "", "", "--", "--", "", ""],
  [<span className="flex items-center -ml-[1px]"><ActivatorIcon />PlagueRadioTransmitterRef *</span>, "0D027...", "", "Activator", "", "", "--", "(.", "", ""],
  [<span className="flex items-center"><StaticIcon />StaticCollectionPivotDummy *</span>, "0D027...", "", "Static", "", "", "--", "--", "", ""],
];
const CellWindow = () => (
  <div className="absolute left-[14px] top-[686px] w-[1308px] h-[256px] bg-[#f0f0f0] flex flex-col shadow-[0_1px_6px_rgba(0,0,0,0.4)]">
    <WinTitle text="Cell View" />
    <div className="flex">
      <div className="w-[660px] shrink-0 pl-[12px] flex flex-col">
        <div className="flex items-center h-[21px] mt-[10px]">
          <span className="w-[69px]">World Space</span>
          <Select className="w-[523px] h-[21px]" text="Interiors" />
        </div>
        <div className="flex items-center h-[22px] mt-[5px]">
          <span className="ml-[4px] w-[14px]">X</span>
          <Input disabled className="w-[35px] h-[22px]" />
          <span className="ml-[8px] w-[9px]">Y</span>
          <Input disabled className="w-[35px] h-[22px]" />
          <Btn disabled className="ml-[8px] w-[28px] h-[18px]">Go</Btn>
        </div>
        <Check label="Loaded at top" className="mt-[4px] ml-[1px]" />
        <ListView className="mt-[5px] w-[640px] h-[133px]" headH={25} minRows={7} selected={0} selectTo={517}
          cols={[{ label: "EditorID", w: 207, caret: 1 }, { label: "Name", w: 44 }, { label: "L", w: 16 }, { label: "Coords", w: 61 }, { label: "L...", w: 29 }, { label: "Owner", w: 80, headCenter: 1 }, { label: "Last Combin...", w: 80, center: 1 }, { label: "", w: 103 }]}
          rows={leftRows.map((r) => [...r, ""])}
          right={
            <div className="w-[18px] shrink-0 bg-[#f0f0f0] flex flex-col items-center pt-[7px] pb-[5px]">
              <svg width="11" height="7" viewBox="0 0 11 7"><path d="M1 6L5.5 1.5L10 6" fill="none" stroke="#333" strokeWidth="1.6" /></svg>
              <div className="w-[15px] h-[17px] bg-[#cdcdcd] mt-[4px]" />
              <div className="flex-1" />
              <svg width="11" height="7" viewBox="0 0 11 7"><path d="M1 1L5.5 5.5L10 1" fill="none" stroke="#333" strokeWidth="1.6" /></svg>
            </div>
          } />
      </div>
      <div className="flex flex-col">
        <div className="mt-[10px] ml-[3px] w-[606px] h-[32px] border border-[#828790] bg-white" />
        <div className="flex mt-[6px] ml-[5px]">
          <Check label="Filtered Only" className="w-[85px]" />
          <Check label="Visible Only" />
        </div>
        <Check label="Selected Only" className="mt-[3px] ml-[5px]" />
        <ListView className="mt-[3px] w-[640px] h-[133px]" headH={25} minRows={7}
          cols={[{ label: "Editor ID", w: 281, caret: 1 }, { label: "Form ID", w: 58 }, { label: "G", w: 18 }, { label: "Type", w: 122 }, { label: "C", w: 18 }, { label: "L...", w: 31 }, { label: "L...", w: 33 }, { label: "F", w: 17 }, { label: "I.", w: 17 }, { label: "L", w: 18 }, { label: "", w: 25 }]}
          rows={rightRows.map((r) => [r[0], ...r.slice(1), ""])} />
      </div>
    </div>
  </div>
);

const BottomWindow = () => (
  <div className="absolute left-[1326px] top-[625px] w-[591px] h-[324px] bg-[#f0f0f0] flex flex-col shadow-[0_1px_6px_rgba(0,0,0,0.35)]">
    <WinTitle close text="" />
    <div className="h-[66px] shrink-0 border-b border-[#a8a8a8]" />
    <div className="flex-1 ml-[5px] bg-white border-l border-[#a8a8a8]">
      <div className="flex h-[24px] mt-[4px] font-bold text-[13px]">
        <div className="w-[439px] shrink-0" />
        {[["#", "w-[48px]"], ["V", "w-[29px]"], ["F", "w-[28px]"], ["A", "w-[27px]"]].map(([t, w]) => (
          <div key={t} className={`${w} shrink-0 flex items-center justify-center border-l border-[#eeeeee]`}>{t}</div>
        ))}
      </div>
      <div className="flex h-[15px] border-b border-[#dddddd]">
        <div className="w-[439px] shrink-0 flex items-center pl-[12px]"><span className="w-[8px] border-t border-dotted border-[#666] mr-[9px]" />Default</div>
        <div className="w-[48px] shrink-0 border-l border-[#eeeeee] pl-[9px] flex items-center">0</div>
        <div className="w-[29px] shrink-0 border-l border-[#eeeeee] flex items-center justify-center">
          <svg width="16" height="9" viewBox="0 0 16 9"><path d="M1 4.5C4 0 12 0 15 4.5C12 9 4 9 1 4.5Z" fill="none" stroke="#000" /><rect x="5.5" y="1.5" width="5" height="6" fill="#fff" stroke="#000" strokeWidth="1.6" /></svg>
        </div>
        <div className="w-[28px] shrink-0 border-l border-[#eeeeee]" />
        <div className="w-[27px] shrink-0 border-l border-r border-[#eeeeee] flex items-center justify-center font-bold">A</div>
      </div>
    </div>
  </div>
);

export default function App() {
  return (
    <div className="relative w-[1923px] h-[1043px] overflow-hidden flex flex-col bg-white font-['Liberation_Sans',sans-serif] text-[11px] leading-[13px] tracking-[-0.12px] text-black">
      <div className="h-[22px] shrink-0 flex items-center pl-[3px] text-[12px] tracking-[-0.05px] font-['Roboto',sans-serif] text-[#808080] bg-white">
        <svg width="18" height="12" viewBox="0 0 18 12" className="mr-[2px] shrink-0"><path d="M0 6L6 4L8 1H11L10 4L16 5L18 7L12 8L9 11H7L8 8L2 8Z" fill="#333" /></svg>
        <span className="whitespace-nowrap">Creation Kit 64-bit - [MTP_RedHouse.esp]* &lt;ESL Capable - 3513 IDs remaining&gt;</span>
        <div className="ml-auto flex items-center">
          <div className="w-[11px] h-[1px] bg-[#808080] mr-[35px]" />
          <div className="w-[9px] h-[9px] border border-[#808080] mr-[35px]" />
          <div className="mr-[24px]"><XMark /></div>
        </div>
      </div>
      <div className="h-[19px] shrink-0 flex items-center gap-[13.5px] pl-[7px] text-[12px] tracking-normal font-['Roboto',sans-serif] text-[#333333] bg-white">
        {["File", "Edit", "View", "World", "NavMesh", "Visibility", "Character", "Gameplay", "Help"].map((m) => <span key={m}>{m}</span>)}
      </div>
      <div className="h-[1px] shrink-0 bg-white" />
      <Toolbar />
      <div className="relative flex-1 min-h-0 bg-gradient-to-b from-[#b0b0b0] from-0% to-[#a0a0a0] to-[3%]">
        <Viewport />
        <ObjectWindow />
        <BottomWindow />
        <CellWindow />
        <Dialog />
      </div>
      <div className="h-[22px] shrink-0 bg-[#f0f0f0] flex items-center font-['Roboto',sans-serif] text-[12px] tracking-[-0.1px] text-[#222]">
        <div className="w-[249px] pl-[2px] shrink-0 border-r border-[#c8c8c8] h-[20px] flex items-center">Camera</div>
        <div className="w-[450px] pl-[5px] shrink-0 border-r border-[#c8c8c8] h-[20px] flex items-center whitespace-nowrap overflow-hidden">Game cam: -38, -1208, 368 (0000PlagueRadioCell) [Snap units: 1] [WORLD] [No snap</div>
        <div className="w-[400px] pl-[5px] shrink-0 border-r border-[#c8c8c8] h-[20px] flex items-center whitespace-nowrap overflow-hidden">8 main draw calls, 1614 polys, 0 Bytes textures, 16 FPS</div>
        <div className="pl-[5px] whitespace-nowrap">Saving...Done!</div>
      </div>
      <div className="h-[3px] shrink-0 bg-[#1f1f1f]" />
      <div className="absolute right-0 top-[43px] bottom-0 w-[3px] bg-[#4a4a4a]" />
    </div>
  );
}
